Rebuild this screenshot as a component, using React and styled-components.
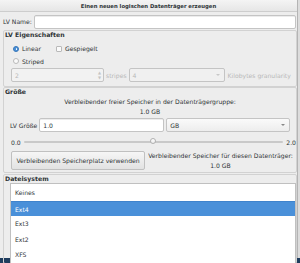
import styled, { createGlobalStyle } from "styled-components";

const Global = createGlobalStyle`
  html, body { margin: 0; padding: 0; }
  body {
    width: 300px;
    height: 263px;
    overflow: hidden;
    background: #1f3d5e;
    font-family: "DejaVu Sans", sans-serif;
    font-size: 6.1px;
    color: #2e3436;
    white-space: nowrap;
  }
`;

const Screen = styled.div`
  position: relative;
  width: 300px;
  height: 263px;
`;

const Dialog = styled.div`
  width: 297px;
  height: 258px;
  background: #ededed;
  border-right: 1px solid #b4b4b4;
  box-shadow: 2px 0 0 #dcdcdc;
  display: flex;
  flex-direction: column;
`;

const TitleBar = styled.div`
  height: 11px;
  flex: none;
  background: linear-gradient(#f4f4f4, #e6e6e6);
  border-bottom: 1px solid #cdcdcd;
  display: flex;
  align-items: center;
  justify-content: center;
  font-weight: bold;
  font-size: 5.3px;
  color: #2e3436;
`;

const Body = styled.div`
  display: flex;
  flex-direction: column;
  padding: 2px 0 0 3px;
`;

const NameRow = styled.div`
  display: flex;
  align-items: center;
  gap: 2px;
  height: 15px;
`;

const Entry = styled.div`
  box-sizing: border-box;
  height: 14px;
  width: ${(p) => p.$w}px;
  flex: none;
  background: ${(p) => (p.$disabled ? "#f2f2f2" : "#fff")};
  border: 1px solid #c4c4c4;
  border-radius: 2px;
  box-shadow: ${(p) => (p.$disabled ? "none" : "inset 0 1px 0 #ececec")};
  display: flex;
  align-items: center;
  padding-left: 3px;
  color: ${(p) => (p.$disabled ? "#b8b8b8" : "#2e3436")};
  position: relative;
`;

const Frame = styled.div`
  box-sizing: border-box;
  width: 294px;
  border: 1px solid #d2d2d2;
  border-radius: 2px;
  margin-top: ${(p) => p.$mt || 0}px;
  height: ${(p) => p.$h}px;
  flex: none;
  display: flex;
  flex-direction: column;
`;

const FrameLabel = styled.div`
  font-weight: bold;
  font-size: 6.2px;
  padding-left: 1px;
  height: 8px;
  line-height: 8px;
`;

const Row = styled.div`
  display: flex;
  align-items: center;
  flex: none;
  height: ${(p) => p.$h || 13}px;
  padding-left: ${(p) => p.$pl || 0}px;
  margin-top: ${(p) => p.$mt || 0}px;
  gap: ${(p) => p.$gap || 0}px;
`;

const Check = styled.span`
  display: inline-flex;
  align-items: center;
  gap: 3px;
  margin-right: ${(p) => p.$mr || 0}px;
  color: #2e3436;
`;

const Radio = styled.span`
  box-sizing: border-box;
  width: 6px;
  height: 6px;
  border-radius: 50%;
  border: 1px solid ${(p) => (p.$on ? "#3b78b8" : "#b9b9b9")};
  background: ${(p) => (p.$on ? "#4a90d9" : "#fafafa")};
  position: relative;
  &::after {
    content: "";
    display: ${(p) => (p.$on ? "block" : "none")};
    position: absolute;
    left: 1.5px;
    top: 1.5px;
    width: 1.6px;
    height: 1.6px;
    border-radius: 50%;
    background: #fff;
  }
`;

const Box = styled.span`
  box-sizing: border-box;
  width: 6px;
  height: 6px;
  border: 1px solid #b9b9b9;
  border-radius: 1px;
  background: #fafafa;
`;

const Dim = styled.span`
  color: #b8b8b8;
  padding: 0 ${(p) => p.$px || 3}px;
`;

const SpinArrows = styled.span`
  position: absolute;
  right: 2px;
  top: 1px;
  display: flex;
  flex-direction: column;
  font-size: 4px;
  line-height: 5px;
  color: #c4c4c4;
`;

const ComboArrow = styled.span`
  position: absolute;
  right: 4px;
  top: 50%;
  transform: translateY(-50%);
  width: 0;
  height: 0;
  border-left: 2px solid transparent;
  border-right: 2px solid transparent;
  border-top: 2px solid ${(p) => (p.$disabled ? "#c8c8c8" : "#888")};
`;

const Combo = styled(Entry)`
  box-shadow: none;
  background: ${(p) => (p.$disabled ? "#f0f0f0" : "linear-gradient(#fafafa, #ededed)")};
`;

const Centered = styled.div`
  text-align: center;
  line-height: 10px;
  margin-top: 1px;
  flex: none;
`;

const Slider = styled.div`
  display: flex;
  align-items: center;
  height: 18px;
  flex: none;
  padding-left: 7px;
  gap: 3px;
`;

const Track = styled.div`
  position: relative;
  flex: 1;
  height: 2px;
  background: #c9c9c9;
  border-radius: 1px;
  &::after {
    content: "";
    position: absolute;
    left: 126px;
    top: -3px;
    width: 6px;
    height: 6px;
    box-sizing: border-box;
    border-radius: 50%;
    border: 1px solid #b0b0b0;
    background: linear-gradient(#fff, #ececec);
  }
`;

const Bottom = styled.div`
  display: flex;
  align-items: center;
  padding-left: 7px;
  height: 19px;
  flex: none;
`;

const Button = styled.div`
  box-sizing: border-box;
  width: 134px;
  height: 19px;
  flex: none;
  display: flex;
  align-items: center;
  justify-content: center;
  border: 1px solid #c0c0c0;
  border-radius: 2px;
  background: linear-gradient(#f6f6f6, #e2e2e2);
`;

const Side = styled.div`
  flex: 1;
  text-align: center;
  line-height: 9.5px;
`;

const Popup = styled.ul`
  position: absolute;
  left: 10px;
  top: 183px;
  width: 286px;
  height: 84px;
  box-sizing: border-box;
  margin: 0;
  padding: 1px 0 0;
  list-style: none;
  background: #fff;
  border: 1px solid #c0c0c0;
  border-bottom: none;
`;

const Item = styled.li`
  height: 15.5px;
  line-height: 15.5px;
  padding-left: 4px;
  background: ${(p) => (p.$active ? "#4a90d9" : "transparent")};
  color: ${(p) => (p.$active ? "#fff" : "#2e3436")};
  border-top: ${(p) => (p.$active ? "1px solid #3f83cc" : "none")};
  box-sizing: border-box;
`;

const items = ["Keines", "Ext4", "Ext3", "Ext2", "XFS"];

export default function App() {
  return (
    <Screen>
      <Global />
      <Dialog>
        <TitleBar>Einen neuen logischen Datenträger erzeugen</TitleBar>
        <Body>
          <NameRow>
            <span>LV Name:</span>
            <Entry $w={262} />
          </NameRow>
          <Frame $h={57} $mt={1}>
            <FrameLabel>LV Eigenschaften</FrameLabel>
            <Row $pl={9} $h={13} $mt={3}>
              <Check $mr={15}>
                <Radio $on />
                Linear
              </Check>
              <Check>
                <Box />
                Gespiegelt
              </Check>
            </Row>
            <Row $pl={9} $h={12}>
              <Check>
                <Radio />
                Striped
              </Check>
            </Row>
            <Row $pl={7} $h={16}>
              <Entry $w={93} $disabled>
                2
                <SpinArrows>
                  <span>▲</span>
                  <span>▼</span>
                </SpinArrows>
              </Entry>
              <Dim $px={2}>stripes</Dim>
              <Combo $w={96} $disabled>
                4
                <ComboArrow $disabled />
              </Combo>
              <Dim $px={3}>Kilobytes granularity</Dim>
            </Row>
          </Frame>
          <Frame $h={86}>
            <FrameLabel>Größe</FrameLabel>
            <Centered>
              Verbleibender freier Speicher in der Datenträgergruppe:
              <br />
              1.0 GB
            </Centered>
            <Row $pl={6} $h={16} $gap={2}>
              <span>LV Größe</span>
              <Entry $w={125}>1.0</Entry>
              <Combo $w={124}>
                GB
                <ComboArrow />
              </Combo>
            </Row>
            <Slider>
              <span>0.0</span>
              <Track />
              <span>2.0</span>
            </Slider>
            <Bottom>
              <Button>Verbleibenden Speicherplatz verwenden</Button>
              <Side>
                Verbleibender Speicher für diesen Datenträger:
                <br />
                1.0 GB
              </Side>
            </Bottom>
          </Frame>
          <Frame $h={90} $mt={1}>
            <FrameLabel>Dateisystem</FrameLabel>
          </Frame>
        </Body>
      </Dialog>
      <Popup>
        {items.map((it) => (
          <Item key={it} $active={it === "Ext4"}>
            {it}
          </Item>
        ))}
      </Popup>
    </Screen>
  );
}
